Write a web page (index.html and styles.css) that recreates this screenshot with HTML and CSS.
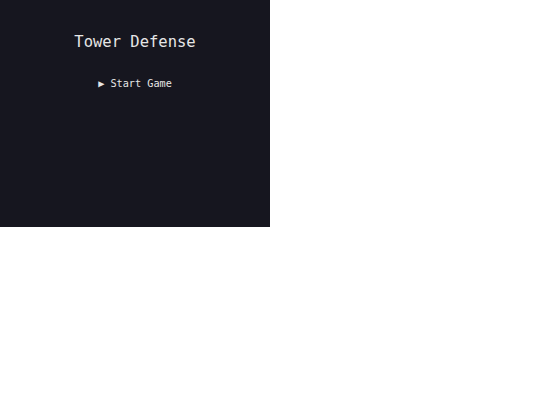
FILE: index.html
```html
<!DOCTYPE html>
<html>
<head>
<meta charset="utf-8">
<link rel="stylesheet" href="styles.css">
</head>
<body>
<div class="panel">
  <h1 class="title">Tower Defense</h1>
  <div class="menu">
    <div class="item">▶ Start Game</div>
  </div>
</div>
</body>
</html>
```
FILE: styles.css
```css
html, body {
  margin: 0;
  padding: 0;
  background: #ffffff;
}
.panel {
  width: 270px;
  height: 227px;
  background: #16161f;
  color: #e6e6e6;
  font-family: "DejaVu Sans Mono", monospace;
  display: flex;
  flex-direction: column;
  align-items: center;
  padding-top: 33px;
  box-sizing: border-box;
}
.title {
  margin: 0;
  font-size: 15.5px;
  font-weight: normal;
  line-height: 18px;
}
.menu {
  margin-top: 26px;
  display: flex;
  flex-direction: column;
  align-items: center;
}
.item {
  font-size: 10.2px;
  line-height: 13px;
}
```
